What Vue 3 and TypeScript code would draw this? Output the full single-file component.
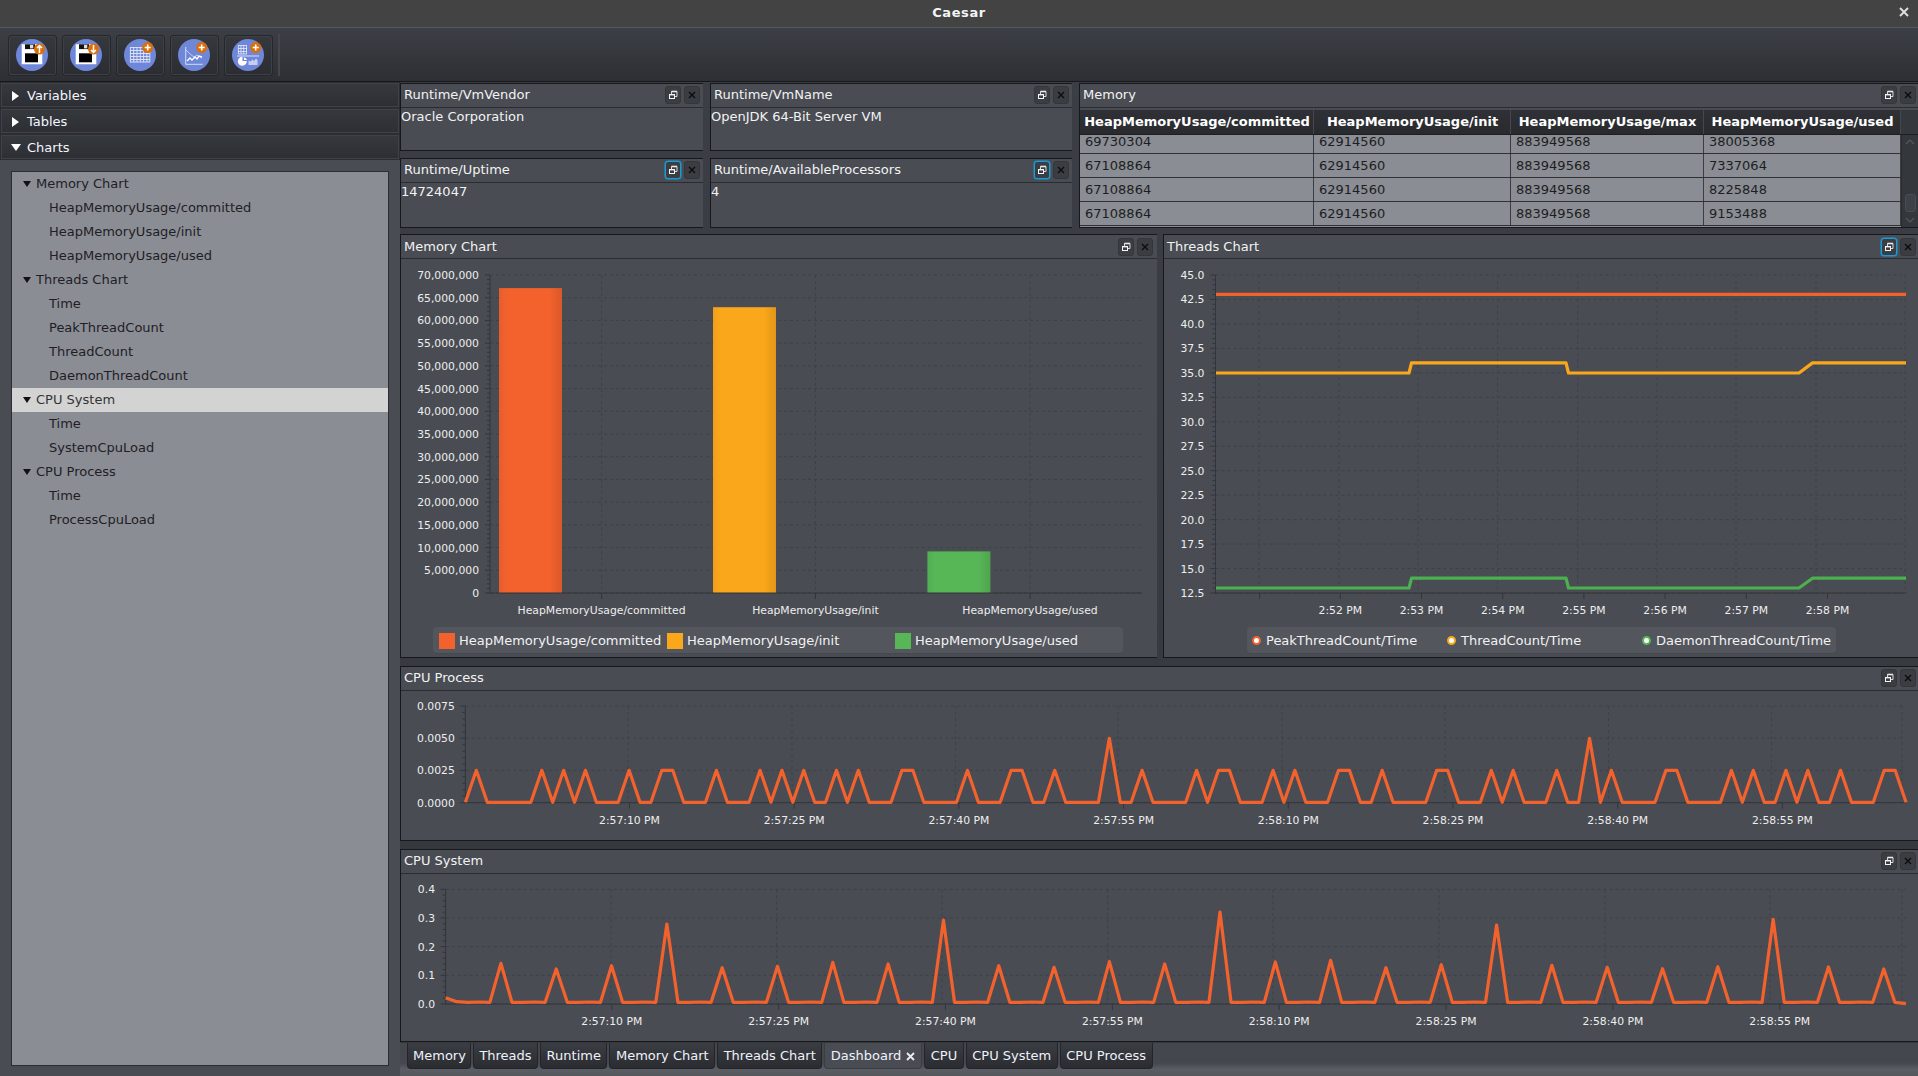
<script setup lang="ts">
interface Tick { at: number; label: string }
interface Series { color: string; points: [number, number][] }
interface Bar { x: number; w: number; top: number; color: string }
interface LegendItem { label: string; color: string }
interface Chart {
  title: string; x: number; y: number; w: number; h: number; wide: boolean; active: boolean
  left: number; right: number; top: number; bottom: number; yLabelX: number; xLabelY: number
  yTicks: Tick[]; xTicks: Tick[]; vGrid: number[]; minors: number[]
  series: Series[]; bars: Bar[]; legend: LegendItem[]; legendKind: string
}

const ORANGE = '#f3622d', AMBER = '#fba71b', GREEN = '#57b757'

const minorsOf = (ys: number[], n: number): number[] => {
  const out: number[] = []
  for (let i = 0; i + 1 < ys.length; i++) {
    for (let k = 1; k < n; k++) out.push(ys[i] + ((ys[i + 1] - ys[i]) * k) / n)
  }
  return out
}

// Memory chart
const memTicks: Tick[] = []
for (let i = 14; i >= 0; i--) memTicks.push({ at: 593 - (318 * i) / 14, label: (i * 5000000).toLocaleString('en-US') })

// Threads chart
const thrTicks: Tick[] = []
for (let v = 45; v >= 12.5; v -= 2.5) thrTicks.push({ at: 275 + (45 - v) * (318 / 32.5), label: v.toFixed(1) })
const stepLine = (lo: number, hi: number): [number, number][] => [
  [1216, lo], [1409, lo], [1411.5, hi], [1566, hi], [1568.5, lo], [1799, lo], [1812.5, hi], [1906, hi]
]
const thrLabels = ['2:52 PM', '2:53 PM', '2:54 PM', '2:55 PM', '2:56 PM', '2:57 PM', '2:58 PM']

// CPU process
const procX = (i: number) => 465.4 + i * 10.914
const procLow = [1, 7, 9, 11, 15, 18, 19, 23, 27, 29, 31, 34, 36, 40, 41, 46, 50, 51, 54, 62, 67, 69, 70, 74, 76, 80, 81, 84, 89, 90, 94, 96, 100, 105, 110, 111, 116, 118, 121, 123, 126, 130, 131]
const procHigh = [59, 103]
const procPts: [number, number][] = []
for (let i = 0; i <= 132; i++) {
  const y = procHigh.includes(i) ? 738.3 : procLow.includes(i) ? 770.3 : 802.3
  procPts.push([procX(i), y])
}
const procTicksY = [706, 738.2, 770.4, 802.7]
const timeLabels = ['2:57:10 PM', '2:57:25 PM', '2:57:40 PM', '2:57:55 PM', '2:58:10 PM', '2:58:25 PM', '2:58:40 PM', '2:58:55 PM']

// CPU system
const sysX = (i: number) => 445.6 + i * 11.063
const sysPeaks = [880, 897, 887, 762, 893, 889, 877, 882, 750, 887, 892, 875, 882, 726, 876, 871, 893, 884, 765, 886, 892, 896, 890, 748, 891, 897]
const sysPts: [number, number][] = []
for (let i = 0; i <= 132; i++) {
  let zy = 997
  if (i === 0) zy = 983
  else if (i === 1) zy = 995
  else if (i === 132) zy = 1001
  else if (i % 5 === 0) zy = sysPeaks[i / 5 - 1]
  else if (i % 5 === 3) zy = 996
  sysPts.push([sysX(i), 670 + zy / 3])
}
const sysTicksY = [889.3, 918, 946.6, 975.3, 1004]

const charts: Chart[] = [
  {
    title: 'Memory Chart', x: 400, y: 234, w: 755, h: 368, wide: false, active: false,
    left: 490, right: 1142, top: 275, bottom: 593, yLabelX: 479, xLabelY: 610,
    yTicks: memTicks, xTicks: [
      { at: 601.6, label: 'HeapMemoryUsage/committed' },
      { at: 815.4, label: 'HeapMemoryUsage/init' },
      { at: 1030, label: 'HeapMemoryUsage/used' }
    ],
    vGrid: [601.6, 815.4, 1030], minors: minorsOf(memTicks.map(t => t.at), 5),
    series: [],
    bars: [
      { x: 499, w: 63, top: 288.1, color: ORANGE },
      { x: 713, w: 63, top: 307.2, color: AMBER },
      { x: 927.4, w: 63, top: 551.4, color: GREEN }
    ],
    legend: [
      { label: 'HeapMemoryUsage/committed', color: ORANGE },
      { label: 'HeapMemoryUsage/init', color: AMBER },
      { label: 'HeapMemoryUsage/used', color: GREEN }
    ],
    legendKind: 'mem'
  },
  {
    title: 'Threads Chart', x: 1163, y: 234, w: 753, h: 368, wide: false, active: true,
    left: 1215.5, right: 1906, top: 275, bottom: 593, yLabelX: 1204.5, xLabelY: 610,
    yTicks: thrTicks,
    xTicks: [{ at: 1259.6, label: '' }].concat(thrLabels.map((l, i) => ({ at: 1340.3 + i * 81.2, label: l }))),
    vGrid: [1259, 1339, 1418, 1497.5, 1577.7, 1657, 1736, 1816, 1905], minors: minorsOf(thrTicks.map(t => t.at), 5),
    series: [
      { color: ORANGE, points: [[1216, 294.4], [1906, 294.4]] },
      { color: AMBER, points: stepLine(373, 362.9) },
      { color: '#4caf50', points: stepLine(588, 578.2) }
    ],
    bars: [],
    legend: [
      { label: 'PeakThreadCount/Time', color: ORANGE },
      { label: 'ThreadCount/Time', color: AMBER },
      { label: 'DaemonThreadCount/Time', color: GREEN }
    ],
    legendKind: 'thr'
  },
  {
    title: 'CPU Process', x: 400, y: 666, w: 1516, h: 149, wide: true, active: false,
    left: 465.4, right: 1906, top: 706, bottom: 802.7, yLabelX: 454.8, xLabelY: 820,
    yTicks: ['0.0075', '0.0050', '0.0025', '0.0000'].map((label, i) => ({ at: procTicksY[i], label })),
    xTicks: timeLabels.map((label, i) => ({ at: 629.5 + i * 164.7, label })),
    vGrid: [628, 792, 955.5, 1118, 1282, 1445, 1608.6, 1771.5, 1902], minors: minorsOf(procTicksY, 5),
    series: [{ color: ORANGE, points: procPts }], bars: [], legend: [], legendKind: ''
  },
  {
    title: 'CPU System', x: 400, y: 849, w: 1516, h: 167, wide: true, active: false,
    left: 445.6, right: 1906, top: 889.3, bottom: 1004, yLabelX: 435, xLabelY: 1021,
    yTicks: ['0.4', '0.3', '0.2', '0.1', '0.0'].map((label, i) => ({ at: sysTicksY[i], label })),
    xTicks: timeLabels.map((label, i) => ({ at: 611.8 + i * 166.85, label })),
    vGrid: [611, 776.6, 942, 1107.7, 1273, 1439, 1605, 1770, 1902], minors: minorsOf(sysTicksY, 5),
    series: [{ color: ORANGE, points: sysPts }], bars: [], legend: [], legendKind: ''
  }
]

const poly = (s: Series) => s.points.map(p => p.join(',')).join(' ')

const infoPanels = [
  { title: 'Runtime/VmVendor', value: 'Oracle Corporation', active: false },
  { title: 'Runtime/VmName', value: 'OpenJDK 64-Bit Server VM', active: false },
  { title: 'Runtime/Uptime', value: '14724047', active: true },
  { title: 'Runtime/AvailableProcessors', value: '4', active: true }
]

const columns = ['HeapMemoryUsage/committed', 'HeapMemoryUsage/init', 'HeapMemoryUsage/max', 'HeapMemoryUsage/used']
const rows = [
  ['69730304', '62914560', '883949568', '38005368'],
  ['67108864', '62914560', '883949568', '7337064'],
  ['67108864', '62914560', '883949568', '8225848'],
  ['67108864', '62914560', '883949568', '9153488']
]

const tree = [
  { label: 'Memory Chart', group: true, sel: false },
  { label: 'HeapMemoryUsage/committed', group: false, sel: false },
  { label: 'HeapMemoryUsage/init', group: false, sel: false },
  { label: 'HeapMemoryUsage/used', group: false, sel: false },
  { label: 'Threads Chart', group: true, sel: false },
  { label: 'Time', group: false, sel: false },
  { label: 'PeakThreadCount', group: false, sel: false },
  { label: 'ThreadCount', group: false, sel: false },
  { label: 'DaemonThreadCount', group: false, sel: false },
  { label: 'CPU System', group: true, sel: true },
  { label: 'Time', group: false, sel: false },
  { label: 'SystemCpuLoad', group: false, sel: false },
  { label: 'CPU Process', group: true, sel: false },
  { label: 'Time', group: false, sel: false },
  { label: 'ProcessCpuLoad', group: false, sel: false }
]

const tabs = ['Memory', 'Threads', 'Runtime', 'Memory Chart', 'Threads Chart', 'Dashboard', 'CPU', 'CPU System', 'CPU Process']
</script>

<template>
  <div class="app">
    <svg width="0" height="0" class="defs">
      <symbol id="restore" viewBox="0 0 16 18">
        <path d="M6.5 8V5.5h5.5v5h-2.5" fill="none" stroke="#d8d8d8" />
        <path d="M6.5 5.5h5.5" stroke="#e8e8e8" stroke-width="1.6" />
        <rect x="4.5" y="8.5" width="5" height="4" fill="#3a3d42" stroke="#f4f4f4" />
        <path d="M4.5 8.7h5" stroke="#f4f4f4" stroke-width="1.4" />
      </symbol>
      <symbol id="close" viewBox="0 0 16 18">
        <path d="M5 6l6 6M11 6l-6 6" stroke="#0c0c0c" stroke-width="1.4" fill="none" />
      </symbol>
      <linearGradient id="barShade" x1="0" x2="1" y1="0" y2="0">
        <stop offset="0" stop-color="#000" stop-opacity="0.05" />
        <stop offset="0.12" stop-color="#000" stop-opacity="0" />
        <stop offset="0.8" stop-color="#000" stop-opacity="0" />
        <stop offset="1" stop-color="#000" stop-opacity="0.1" />
      </linearGradient>
    </svg>

    <header class="title">
      <span class="title-text">Caesar</span>
      <svg class="win-close" width="10" height="10" viewBox="0 0 10 10"><path d="M1 1l8 8M9 1l-8 8" stroke="#ddd" stroke-width="2" /></svg>
    </header>

    <nav class="toolbar">
      <button class="tool">
        <svg width="32" height="32" viewBox="0 0 32 32">
          <circle cx="16" cy="16" r="16" fill="#6f87d9" />
          <path d="M5.7 5.3H24l2.3 2.3v17.7H5.7z" fill="#fff" />
          <rect x="9" y="5.3" width="10" height="4.8" fill="#111" />
          <rect x="14" y="5.8" width="3.3" height="3.6" fill="#ddd" />
          <rect x="9" y="14.3" width="13" height="9" fill="#000" />
          <circle cx="23.5" cy="10" r="5.5" fill="#d96f0a" />
          <path d="M23.5 14V7M21 9l2.5-2.5L26 9" stroke="#fff" stroke-width="1.5" fill="none" />
        </svg>
      </button>
      <button class="tool">
        <svg width="32" height="32" viewBox="0 0 32 32">
          <circle cx="16" cy="16" r="16" fill="#6f87d9" />
          <path d="M5.7 5.3H24l2.3 2.3v17.7H5.7z" fill="#fff" />
          <rect x="9" y="5.3" width="10" height="4.8" fill="#111" />
          <rect x="14" y="5.8" width="3.3" height="3.6" fill="#ddd" />
          <rect x="9" y="14.3" width="13" height="9" fill="#000" />
          <circle cx="23.5" cy="10" r="5.5" fill="#d96f0a" />
          <path d="M23.5 6v7M21 11l2.5 2.5L26 11" stroke="#fff" stroke-width="1.5" fill="none" />
        </svg>
      </button>
      <button class="tool">
        <svg width="32" height="32" viewBox="0 0 32 32">
          <circle cx="16" cy="16" r="16" fill="#6f87d9" />
          <path d="M6 8.5h20M6 11.5h20M6 14.5h20M6 17.5h20M6 20.5h20M6 23h20M6.4 8.5V23M9.7 8.5V23M13 8.5V23M16.3 8.5V23M19.6 8.5V23M22.9 8.5V23M25.8 8.5V23" stroke="#e3e8f8" stroke-width="0.9" fill="none" />
          <circle cx="23.7" cy="8.5" r="5.5" fill="#d96f0a" />
          <path d="M23.7 5.5v6M20.7 8.5h6" stroke="#fff" stroke-width="1.6" />
        </svg>
      </button>
      <button class="tool">
        <svg width="32" height="32" viewBox="0 0 32 32">
          <circle cx="16" cy="16" r="16" fill="#6f87d9" />
          <path d="M7.7 8v17.3h17" stroke="#dfe5f7" stroke-width="0.9" fill="none" />
          <path d="M8 11l4 4 4 3 3-2 5 3" stroke="#c8d2f0" stroke-width="0.9" fill="none" />
          <path d="M9 22l3-3 2 2 3-3 2 2 2-3 3 1" stroke="#fff" stroke-width="1.4" fill="none" />
          <circle cx="23.7" cy="8.5" r="5.5" fill="#d96f0a" />
          <path d="M23.7 5.5v6M20.7 8.5h6" stroke="#fff" stroke-width="1.6" />
        </svg>
      </button>
      <button class="tool">
        <svg width="32" height="32" viewBox="0 0 32 32">
          <circle cx="16" cy="16" r="16" fill="#6f87d9" />
          <path d="M6 6.5h9M6 9.5h9M6 12.5h9M6 15h9M6.4 6.5V15M9 6.5V15M11.7 6.5V15M14.5 6.5V15" stroke="#e8ecfa" stroke-width="0.8" fill="none" />
          <path d="M5 17h22" stroke="#e3e8f8" stroke-width="0.9" />
          <path d="M10.5 18v4h4.3a4.5 4.5 0 1 1-4.3-4.2z" fill="#fff" />
          <path d="M12 18.2a4 4 0 0 1 3 2.8h-3z" fill="#fff" />
          <path d="M16.5 26v-4.5l2 1 2-2 1.5 1.5 2-2.5 1.5 1.5V26z" fill="#c5d0f2" />
          <circle cx="23.7" cy="8.5" r="5.5" fill="#d96f0a" />
          <path d="M23.7 5.5v6M20.7 8.5h6" stroke="#fff" stroke-width="1.6" />
        </svg>
      </button>
      <span class="tool-sep"></span>
    </nav>

    <main class="main">
      <aside class="side">
        <div class="pane"><i class="arrow-r"></i>Variables</div>
        <div class="pane"><i class="arrow-r"></i>Tables</div>
        <div class="pane"><i class="arrow-d"></i>Charts</div>
        <div class="side-body">
          <ul class="tree">
            <li v-for="(n, i) in tree" :key="i" class="node" :class="{ group: n.group, sel: n.sel }">
              <i v-if="n.group" class="arrow-tree"></i>{{ n.label }}
            </li>
          </ul>
        </div>
      </aside>

      <section class="work">
        <div class="top-grid">
          <article v-for="p in infoPanels" :key="p.title" class="panel info">
            <div class="head">
              <span class="head-title">{{ p.title }}</span>
              <span class="hbtn" :class="{ on: p.active }"><svg width="16" height="18"><use href="#restore" /></svg></span>
              <span class="hbtn"><svg width="16" height="18"><use href="#close" /></svg></span>
            </div>
            <div class="value">{{ p.value }}</div>
          </article>
          <article class="panel mem-table">
            <div class="head">
              <span class="head-title">Memory</span>
              <span class="hbtn"><svg width="16" height="18"><use href="#restore" /></svg></span>
              <span class="hbtn"><svg width="16" height="18"><use href="#close" /></svg></span>
            </div>
            <div class="tbl">
              <div class="thead">
                <span v-for="c in columns" :key="c" class="th">{{ c }}</span>
                <span class="th filler"></span>
              </div>
              <div class="tbody">
                <div class="rows">
                  <div v-for="(r, i) in rows" :key="i" class="tr">
                    <span v-for="(v, j) in r" :key="j" class="td">{{ v }}</span>
                  </div>
                </div>
                <div class="scroll">
                  <svg width="12" height="8" viewBox="0 0 12 8"><path d="M2 6l4-4 4 4" stroke="#55585e" stroke-width="1.2" fill="none" /></svg>
                  <span class="thumb"></span>
                  <svg width="12" height="8" viewBox="0 0 12 8"><path d="M2 2l4 4 4-4" stroke="#55585e" stroke-width="1.2" fill="none" /></svg>
                </div>
              </div>
            </div>
          </article>
        </div>

        <div class="chart-grid">
          <article v-for="c in charts" :key="c.title" class="panel" :class="{ wide: c.wide }">
            <div class="head">
              <span class="head-title">{{ c.title }}</span>
              <span class="hbtn" :class="{ on: c.active }"><svg width="16" height="18"><use href="#restore" /></svg></span>
              <span class="hbtn"><svg width="16" height="18"><use href="#close" /></svg></span>
            </div>
            <svg class="plot" :width="c.w" :height="c.h" :viewBox="`${c.x + 1} ${c.y + 25} ${c.w} ${c.h}`">
              <g class="grid">
                <line v-for="t in c.yTicks" :key="'h' + t.at" :x1="c.left" :x2="c.right" :y1="t.at" :y2="t.at" />
                <line v-for="v in c.vGrid" :key="'v' + v" :x1="v" :x2="v" :y1="c.top" :y2="c.bottom" />
              </g>
              <g v-for="b in c.bars" :key="b.x">
                <rect :x="b.x" :y="b.top" :width="b.w" :height="c.bottom - b.top" :fill="b.color" />
                <rect :x="b.x" :y="b.top" :width="b.w" :height="c.bottom - b.top" fill="url(#barShade)" />
              </g>
              <g class="axis">
                <line :x1="c.left" :x2="c.left" :y1="c.top" :y2="c.bottom + 0.5" />
                <line :x1="c.left" :x2="c.right" :y1="c.bottom" :y2="c.bottom" />
                <line v-for="t in c.yTicks" :key="'yt' + t.at" :x1="c.left - 5" :x2="c.left" :y1="t.at" :y2="t.at" />
                <line v-for="m in c.minors" :key="'ym' + m" :x1="c.left - 3" :x2="c.left" :y1="m" :y2="m" />
                <line v-for="t in c.xTicks" :key="'xt' + t.at" :x1="t.at" :x2="t.at" :y1="c.bottom" :y2="c.bottom + 6" />
              </g>
              <text v-for="t in c.yTicks" :key="'yl' + t.at" class="tick" text-anchor="end" :x="c.yLabelX" :y="t.at + 4">{{ t.label }}</text>
              <text v-for="t in c.xTicks" :key="'xl' + t.at" class="tick" text-anchor="middle" :x="t.at" :y="c.xLabelY + 4">{{ t.label }}</text>
              <polyline v-for="s in c.series" :key="s.color" class="line" :points="poly(s)" :stroke="s.color" />
            </svg>
            <div v-if="c.legend.length" class="legend" :class="c.legendKind">
              <span v-for="l in c.legend" :key="l.label" class="leg-item">
                <i :class="c.legendKind === 'mem' ? 'swatch' : 'dot'" :style="{ '--c': l.color }"></i>{{ l.label }}
              </span>
            </div>
          </article>
        </div>

        <div class="tabs">
          <span v-for="t in tabs" :key="t" class="tab" :class="{ cur: t === 'Dashboard' }">
            {{ t }}<svg v-if="t === 'Dashboard'" class="tab-x" width="9" height="9" viewBox="0 0 9 9"><path d="M1 1l7 7M8 1l-7 7" stroke="#eee" stroke-width="1.8" /></svg>
          </span>
        </div>
      </section>
    </main>
  </div>
</template>

<style scoped>
.app {
  width: 1918px;
  height: 1076px;
  display: flex;
  flex-direction: column;
  overflow: hidden;
  font: 13px/1.2 "DejaVu Sans", sans-serif;
  color: #f2f2f2;
  background: #2b2d31;
}
.defs { position: absolute; }
.title {
  height: 28px;
  flex: none;
  background: #434343;
  border-bottom: 1px solid #55585c;
  box-sizing: border-box;
  padding-bottom: 2px;
  display: flex;
  align-items: center;
  justify-content: center;
  position: relative;
}
.title-text { font-weight: 700; font-size: 13px; letter-spacing: 0.6px; color: #f4f4f4; }
.win-close { position: absolute; right: 9px; top: 7px; }
.toolbar {
  height: 54px;
  flex: none;
  display: flex;
  align-items: center;
  gap: 5px;
  padding: 1px 0 0 8px;
  box-sizing: border-box;
  background: linear-gradient(#3c3f45, #2d2f34);
  border-bottom: 1px solid #17181a;
}
.tool {
  width: 49px;
  height: 41px;
  padding: 0 1px 0 0;
  display: flex;
  align-items: center;
  justify-content: center;
  background: linear-gradient(#35383d, #2b2d32);
  border: 1px solid #25272b;
  border-radius: 3px;
  box-shadow: inset 0 0 0 1px #3d4046;
}
.tool-sep { width: 2px; height: 42px; background: #44474d; }
.main { flex: 1; display: flex; min-height: 0; }

.side { width: 400px; flex: none; display: flex; flex-direction: column; gap: 2px; padding: 1px 1px 0 1px; box-sizing: border-box; background: #2b2d31; }
.pane {
  height: 24px;
  flex: none;
  box-sizing: border-box;
  display: flex;
  align-items: center;
  padding: 1px 0 0 10px;
  background: linear-gradient(#35383d, #2d2f34);
  border: 1px solid #3f4248;
  color: #f4f7ff;
}
.arrow-r { width: 0; height: 0; margin-right: 8px; border-left: 7px solid #fff; border-top: 5px solid transparent; border-bottom: 5px solid transparent; }
.arrow-d { width: 0; height: 0; margin-right: 6px; margin-left: -1px; border-top: 7px solid #fff; border-left: 5px solid transparent; border-right: 5px solid transparent; }
.side-body { flex: 1; margin: -1px -1px 0; padding: 11px 11px 10px; background: #494c53; display: flex; min-height: 0; }
.tree { flex: 1; list-style: none; margin: 0; padding: 0; background: #8a8d94; border: 1px solid #2b2d31; }
.node { height: 24px; line-height: 23px; padding-left: 37px; color: #1f2024; white-space: nowrap; position: relative; }
.node.group { padding-left: 12px; padding-bottom: 1px; box-sizing: border-box; display: flex; align-items: center; }
.node.sel { background: #d3d3d3; color: #333; }
.arrow-tree { width: 0; height: 0; margin-right: 5px; margin-left: -1px; border-top: 6px solid #111; border-left: 4px solid transparent; border-right: 4px solid transparent; }

.work { flex: 1; min-width: 0; display: flex; flex-direction: column; padding-top: 1px; background: linear-gradient(#3b3e44, #34373c); }
.top-grid { display: grid; grid-template-columns: 303px 362px 1fr; grid-template-rows: 68px 70px; gap: 7px; flex: none; height: 145px; margin-bottom: 6px; }
.chart-grid { display: grid; grid-template-columns: 757px 1fr; grid-template-rows: 424px 175px 193px; column-gap: 6px; row-gap: 8px; flex: none; }
.panel { background: #494c53; border: 1px solid #17181b; border-right: 0; display: flex; flex-direction: column; min-width: 0; box-sizing: border-box; }
.wide { grid-column: 1 / span 2; }
.mem-table { grid-column: 3; grid-row: 1 / span 2; }
.top-grid .panel:nth-child(3) { grid-column: 1; grid-row: 2; }
.top-grid .panel:nth-child(4) { grid-column: 2; grid-row: 2; }
.head {
  height: 24px;
  flex: none;
  box-sizing: border-box;
  display: flex;
  align-items: center;
  gap: 3px;
  padding: 0 2px 2px 3px;
  border-bottom: 1px solid #2a2c30;
}
.chart-grid .panel:not(.wide) .head { padding-bottom: 0; }
.chart-grid .panel:first-child .head { padding-right: 4px; }
.info .head { padding-right: 3px; }
.head-title { flex: 1; color: #f2f2f2; white-space: nowrap; }
.hbtn { width: 16px; height: 18px; flex: none; box-sizing: border-box; border: 1px solid #33363b; border-radius: 3px; background: #3a3d42; display: flex; align-items: center; justify-content: center; }
.hbtn svg { flex: none; margin: -1px; }
.hbtn.on { border-color: #1b9ad6; box-shadow: 0 0 0 0.5px #1b9ad6; }
.value { padding: 0; line-height: 17px; color: #f2f2f2; }

.tbl { flex: 1; display: flex; flex-direction: column; padding: 2px 0 0 0; min-height: 0; }
.thead { height: 25px; flex: none; box-sizing: border-box; display: grid; grid-template-columns: 234px 197px 193px 197px 1fr; background: linear-gradient(#2f3136, #282a2e); border-bottom: 1px solid #1d1e21; }
.th { font-weight: 700; color: #fff; text-align: center; line-height: 24px; padding-left: 1px; border-right: 1px solid #45474c; white-space: nowrap; }
.th.filler { border-right: 0; background: #35383d; }
.tbody { flex: 1; display: flex; min-height: 0; overflow: hidden; }
.rows { flex: 1; overflow: hidden; background: #8a8d94; }
.tr { display: grid; grid-template-columns: 234px 197px 193px 197px; height: 24px; box-sizing: border-box; border-bottom: 1px solid #2f3135; }
.tr:first-child { margin-top: -5px; }
.td { padding-left: 5px; line-height: 23px; color: #1d1e21; border-right: 1px solid #3b3d42; }
.scroll { width: 17px; flex: none; background: #34373c; border-left: 1px solid #2a2c30; box-sizing: border-box; display: flex; flex-direction: column; align-items: center; padding: 3px 0 1px; }
.thumb { width: 11px; height: 18px; margin-top: 48px; margin-bottom: 4px; background: #3e4147; border: 1px solid #4a4d53; border-radius: 3px; box-sizing: border-box; }

.plot { display: block; flex: none; }
.grid line { stroke: #3e4147; stroke-width: 1; stroke-dasharray: 3 3; }
.axis line { stroke: #33363b; stroke-width: 1; }
.tick { font-size: 10.8px; fill: #eeeeee; font-family: "DejaVu Sans", sans-serif; }
.line { fill: none; stroke-width: 3.2; stroke-linejoin: round; }
.legend { height: 27px; box-sizing: border-box; padding-top: 1px; display: grid; align-items: center; background: #53565d; border-radius: 4px; border-bottom: 1px solid #45484e; flex: none; }
.legend.mem { width: 690px; margin-left: 32px; padding-left: 6px; grid-template-columns: 228px 228px 1fr; }
.legend.thr { width: 589px; margin-left: 83px; padding-left: 5px; grid-template-columns: 195px 195px 1fr; }
.leg-item { display: flex; align-items: center; white-space: nowrap; color: #f2f2f2; }
.swatch { width: 16px; height: 16px; margin-right: 4px; background: var(--c); }
.dot { width: 9px; height: 9px; margin-right: 5px; border-radius: 50%; background: #fff; border: 2px solid var(--c); box-sizing: border-box; }

.tabs { flex: 1; margin-top: 1px; padding-left: 6.5px; display: flex; gap: 2px; background: linear-gradient(#44474d 60%, #5a5d63 80%, #54575c); min-height: 0; align-items: flex-start; }
.tab { height: 26px; box-sizing: border-box; padding: 1px 5.5px 0; display: flex; align-items: center; white-space: nowrap; background: linear-gradient(#3a3d43, #2a2c30); border: 1px solid #23252a; border-top: 0; border-radius: 0 0 4px 4px; color: #eef2fb; }
.tab:first-child { padding-right: 4px; }
.tab.cur { background: #494c53; padding-right: 6px; border-color: #3a3d42; }
.tab-x { margin-left: 5px; }
</style>

<style>
body { margin: 0; background: #2b2d31; }
</style>
